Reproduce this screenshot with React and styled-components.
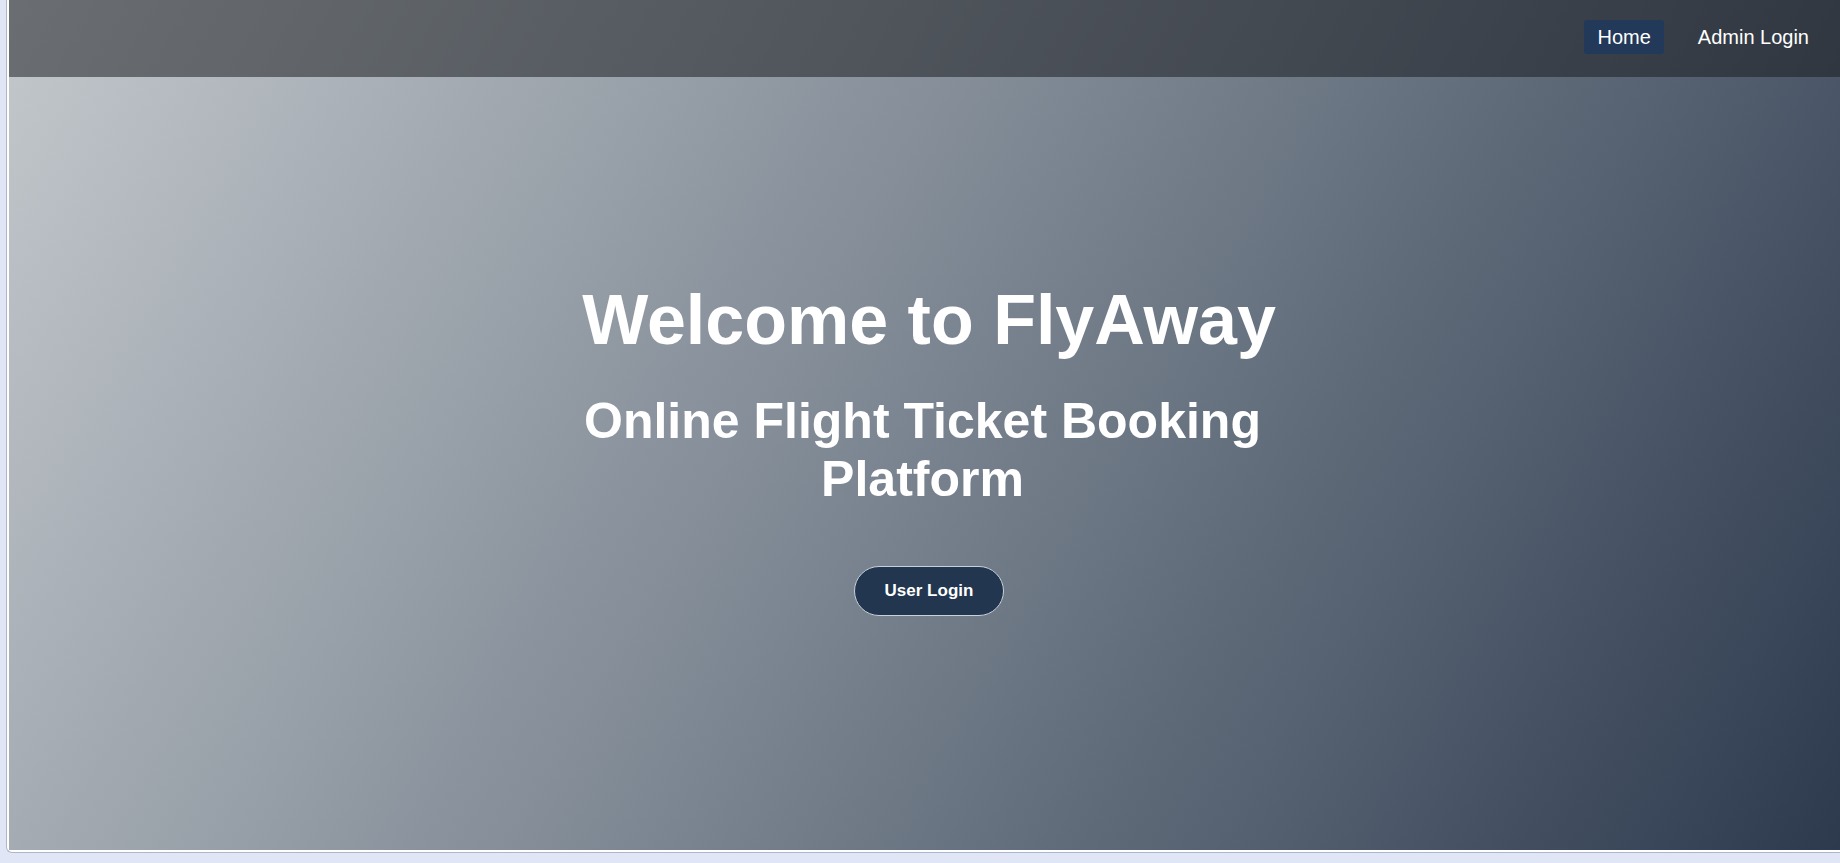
import styled, { createGlobalStyle } from "styled-components";

const GlobalStyle = createGlobalStyle`
  * { box-sizing: border-box; }
  html, body {
    margin: 0;
    padding: 0;
    background: #e1e6f6;
    font-family: "Liberation Sans", Arial, sans-serif;
  }
`;

const Window = styled.div`
  margin-left: 6px;
  height: 853px;
  background: #ffffff;
  padding: 0 0 2px 2px;
  border-left: 1px solid #b0b6c9;
  border-bottom: 1px solid #b0b6c9;
  border-bottom-left-radius: 6px;
`;

const Page = styled.div`
  height: 850px;
  display: flex;
  flex-direction: column;
  background: linear-gradient(120deg, #c3c8cc 0%, #7a8490 50%, #2d3a4e 100%);
  color: #ffffff;
`;

const Header = styled.header`
  height: 77px;
  flex-shrink: 0;
  display: flex;
  align-items: center;
  justify-content: flex-end;
  padding: 0 18px 3px 0;
  background: rgba(24, 27, 31, 0.52);
`;

const Nav = styled.nav`
  display: flex;
  gap: 21px;
`;

const NavLink = styled.a`
  padding: 6px 13px;
  font-size: 20px;
  line-height: 22px;
  color: #ffffff;
  text-decoration: none;
  border-radius: 3px;
  background: ${(p) => (p.$active ? "#22395a" : "transparent")};
  cursor: pointer;
`;

const Hero = styled.main`
  flex: 1;
  display: flex;
  flex-direction: column;
  align-items: center;
  justify-content: center;
  padding: 0 0 31px 9px;
  text-align: center;
`;

const Title = styled.h1`
  margin: 0;
  font-size: 70px;
  font-weight: 700;
`;

const Subtitle = styled.h2`
  margin: 32px 0 0;
  max-width: 813px;
  padding-right: 13px;
  font-size: 50px;
  font-weight: 700;
`;

const LoginButton = styled.button`
  margin-top: 58px;
  padding: 14px 30px;
  font-family: "Liberation Sans", Arial, sans-serif;
  font-size: 17px;
  line-height: 20px;
  font-weight: 700;
  color: #ffffff;
  background: #22364f;
  border: 1px solid #c8d0da;
  border-radius: 999px;
  cursor: pointer;
`;

const App = () => (
  <>
    <GlobalStyle />
    <Window>
      <Page>
        <Header>
          <Nav>
            <NavLink $active>Home</NavLink>
            <NavLink>Admin Login</NavLink>
          </Nav>
        </Header>
        <Hero>
          <Title>Welcome to FlyAway</Title>
          <Subtitle>Online Flight Ticket Booking Platform</Subtitle>
          <LoginButton>User Login</LoginButton>
        </Hero>
      </Page>
    </Window>
  </>
);

export default App;
